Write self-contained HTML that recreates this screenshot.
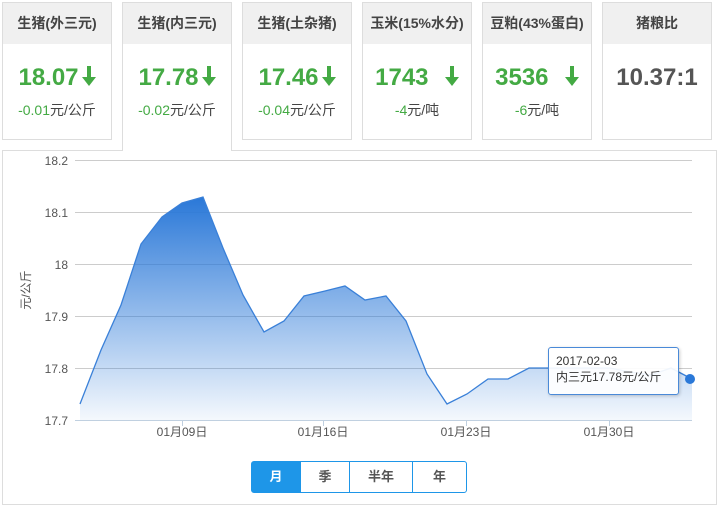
<!DOCTYPE html>
<html><head><meta charset="utf-8"><style>
*{margin:0;padding:0;box-sizing:border-box}
body{width:720px;height:507px;background:#fff;font-family:"Liberation Sans","Noto Sans CJK SC",sans-serif;position:relative;overflow:hidden}
.card{position:absolute;top:2px;width:110px;height:138px;border:1px solid #ddd;background:#fff;text-align:center}
.card .h{height:41px;background:#f0f0f0;color:#444;font-size:14px;font-weight:bold;line-height:41px}
.card .v{margin-top:20px;font-size:24px;font-weight:bold;color:#44aa44;line-height:28px}
.card .v svg{vertical-align:-1px;margin-left:3px}
.card .c{margin-top:8px;font-size:14px;color:#44aa44}
.card .c b{font-weight:normal;color:#444}
.card.act{height:149px;border-bottom:none;z-index:2}
.panel{position:absolute;left:2px;top:150px;width:715px;height:355px;border:1px solid #ddd}
.btns{position:absolute;left:251px;top:461px;height:32px;width:216px;border:1px solid #1e96e8;border-radius:3px;display:flex;font-size:13px;font-weight:bold;color:#555}
.btns div{text-align:center;line-height:30px;border-right:1px solid #1e96e8}
.btns div:last-child{border-right:none}
.tip{position:absolute;left:548px;top:347px;width:131px;height:48px;border:1px solid #4a8ad8;border-radius:3px;background:rgba(255,255,255,.92);font-size:12px;color:#333;padding:5px 0 0 7px;line-height:16px;box-shadow:1px 1px 3px rgba(0,0,0,.2)}
</style></head><body>
<div class="card" style="left:2px"><div class="h">生猪(外三元)</div><div class="v">18.07<svg width="14" height="20" viewBox="0 0 14 20"><path d="M5 0h4v11h5l-7 9-7-9h5z" fill="#44aa44"/></svg></div><div class="c">-0.01<b>元/公斤</b></div></div>
<div class="card act" style="left:122px"><div class="h">生猪(内三元)</div><div class="v">17.78<svg width="14" height="20" viewBox="0 0 14 20"><path d="M5 0h4v11h5l-7 9-7-9h5z" fill="#44aa44"/></svg></div><div class="c">-0.02<b>元/公斤</b></div></div>
<div class="card" style="left:242px"><div class="h">生猪(土杂猪)</div><div class="v">17.46<svg width="14" height="20" viewBox="0 0 14 20"><path d="M5 0h4v11h5l-7 9-7-9h5z" fill="#44aa44"/></svg></div><div class="c">-0.04<b>元/公斤</b></div></div>
<div class="card" style="left:362px"><div class="h">玉米(15%水分)</div><div class="v">1743 &nbsp;<svg width="14" height="20" viewBox="0 0 14 20"><path d="M5 0h4v11h5l-7 9-7-9h5z" fill="#44aa44"/></svg></div><div class="c">-4<b>元/吨</b></div></div>
<div class="card" style="left:482px"><div class="h">豆粕(43%蛋白)</div><div class="v">3536 &nbsp;<svg width="14" height="20" viewBox="0 0 14 20"><path d="M5 0h4v11h5l-7 9-7-9h5z" fill="#44aa44"/></svg></div><div class="c">-6<b>元/吨</b></div></div>
<div class="card" style="left:602px"><div class="h">猪粮比</div><div class="v" style="color:#555">10.37:1</div></div>
<div class="panel"></div>
<svg style="position:absolute;left:0;top:0" width="720" height="507">
<defs><linearGradient id="g" x1="0" y1="0" x2="0" y2="1"><stop offset="0" stop-color="#2a78d8"/><stop offset="1" stop-color="#2a78d8" stop-opacity="0.05"/></linearGradient></defs>
<g stroke="#ccc" stroke-width="1">
<line x1="75" y1="160.5" x2="692" y2="160.5"/><line x1="75" y1="212.5" x2="692" y2="212.5"/><line x1="75" y1="264.5" x2="692" y2="264.5"/><line x1="75" y1="316.5" x2="692" y2="316.5"/><line x1="75" y1="368.5" x2="692" y2="368.5"/>
</g>
<line x1="75" y1="420.5" x2="692" y2="420.5" stroke="#c0d0e0"/>
<g stroke="#c0d0e0"><line x1="182.5" y1="420" x2="182.5" y2="426"/><line x1="323.5" y1="420" x2="323.5" y2="426"/><line x1="466.5" y1="420" x2="466.5" y2="426"/><line x1="609.5" y1="420" x2="609.5" y2="426"/></g>
<polygon fill="url(#g)" points="80,420 80,404 101,350 121,305 141,244 162,217 182,203 203,197 223,248 243,295 264,332 284,321 304,296 325,291 345,286 365,300 386,296 406,321 427,374 447,404 467,394 488,379 508,379 529,368 549,368 569,368 590,368 610,368 630,372 651,375 671,368 692,379 692,420"/>
<polyline fill="none" stroke="#3a80d8" stroke-width="1.3" points="80,404 101,350 121,305 141,244 162,217 182,203 203,197 223,248 243,295 264,332 284,321 304,296 325,291 345,286 365,300 386,296 406,321 427,374 447,404 467,394 488,379 508,379 529,368 549,368 569,368 590,368 610,368 630,372 651,375 671,368 692,379"/>
<circle cx="690" cy="379" r="5" fill="#2a78d8"/>
<g font-size="12" fill="#555" text-anchor="end" font-family="Liberation Sans,sans-serif">
<text x="68" y="165">18.2</text><text x="68" y="217">18.1</text><text x="68" y="269">18</text><text x="68" y="321">17.9</text><text x="68" y="373">17.8</text><text x="68" y="425">17.7</text></g>
<g font-size="12" fill="#555" text-anchor="middle" font-family="Liberation Sans,Noto Sans CJK SC,sans-serif">
<text x="182" y="436">01月09日</text><text x="323" y="436">01月16日</text><text x="466" y="436">01月23日</text><text x="609" y="436">01月30日</text></g>
<text transform="translate(30,290) rotate(-90)" font-size="12" fill="#555" text-anchor="middle" font-family="Liberation Sans,Noto Sans CJK SC,sans-serif">元/公斤</text>
</svg>
<div class="tip">2017-02-03<br>内三元17.78元/公斤</div>
<div class="btns"><div style="width:49px;background:#1e96e8;color:#fff">月</div><div style="width:49px">季</div><div style="width:63px">半年</div><div style="width:53px">年</div></div>
</body></html>
